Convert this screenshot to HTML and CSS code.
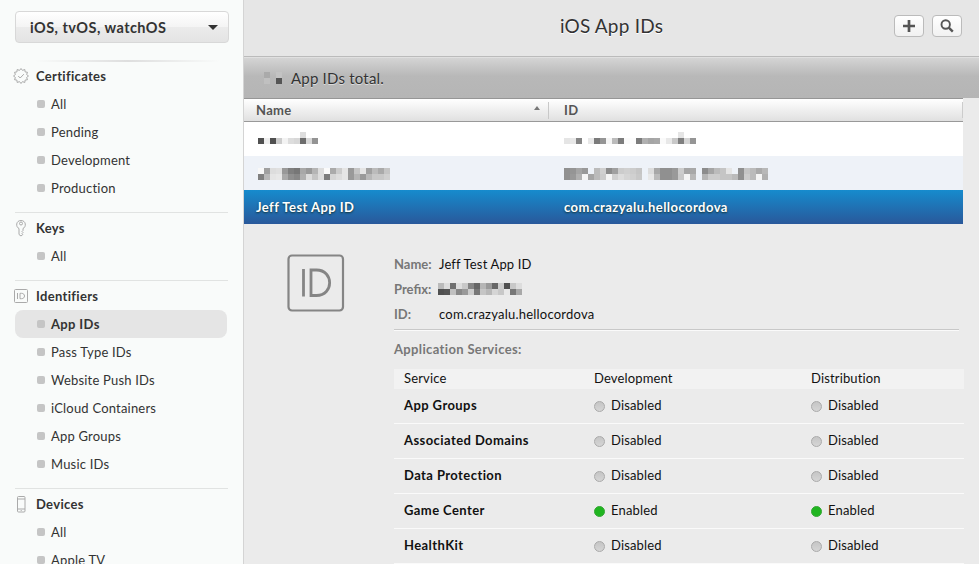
FILE: index.html
```
<!DOCTYPE html>
<html lang="en">
<head>
<meta charset="utf-8">
<title>iOS App IDs</title>
<link rel="stylesheet" href="styles.css">
</head>
<body>
<div class="app">
  <nav class="sidebar">
    <div class="picker"><span>iOS, tvOS, watchOS</span><i class="caret"></i></div>
    <div class="glow"></div>
    <section class="group first">
      <h2><svg class="gicon" width="16" height="18" viewBox="0 0 16 18"><path d="M8 1.500L9.500 3.400L11.800 2.500L12.100 4.900L14.500 5.300L13.600 7.500L15.500 9L13.600 10.500L14.500 12.700L12.100 13.100L11.800 15.500L9.500 14.600L8 16.500L6.500 14.600L4.200 15.500L3.900 13.100L1.500 12.700L2.400 10.500L.5 9L2.400 7.500L1.500 5.300L3.900 4.900L4.200 2.500L6.500 3.400Z"/><path d="M5.200 9l2 2L10.800 7.200"/></svg>Certificates</h2>
      <ul><li>All</li><li>Pending</li><li>Development</li><li>Production</li></ul>
    </section>
    <section class="group">
      <h2><svg class="gicon" width="16" height="18" viewBox="0 0 16 18"><path d="M6 9.500C2.500 8 2.800 1.500 8 1.500S13.500 8 10 9.500V11.500l-1 1 1 1-1 1 .8 1L8 17l-2-1.500z"/><circle cx="8" cy="4.500" r="1.500"/></svg>Keys</h2>
      <ul><li>All</li></ul>
    </section>
    <section class="group">
      <h2><svg class="gicon" width="16" height="18" viewBox="0 0 16 18"><rect x="1.500" y="2.500" width="13" height="13" rx="1"/><path d="M4.500 6v6M7 6.300v5.400h1.500c4 0 4-5.400 0-5.400z"/></svg>Identifiers</h2>
      <ul><li class="on">App IDs</li><li>Pass Type IDs</li><li>Website Push IDs</li><li>iCloud Containers</li><li>App Groups</li><li>Music IDs</li></ul>
    </section>
    <section class="group">
      <h2><svg class="gicon" width="16" height="18" viewBox="0 0 16 18"><rect x="4.500" y="1.500" width="7.500" height="15.500" rx="1"/><path d="M4.500 4h7.500M4.500 14h7.500M7.700 15.500h1"/></svg>Devices</h2>
      <ul><li>All</li><li>Apple TV</li></ul>
    </section>
  </nav>
  <main class="main">
    <header class="top">
      <h1>iOS App IDs</h1>
      <div class="tools">
        <span class="btn"><svg width="14" height="14" viewBox="0 0 14 14"><path d="M7 1v12M1 7h12" stroke-width="2.700"/></svg></span>
        <span class="btn"><svg width="14" height="14" viewBox="0 0 14 14"><circle cx="5.700" cy="5.500" r="4.200" stroke-width="1.900"/><path d="M8.800 8.600l4 4" stroke-width="2.400"/></svg></span>
      </div>
    </header>
    <div class="total"><span class="mosaic count" data-mosaic="count"></span><span class="total-text">App IDs total.</span></div>
    <div class="list">
      <div class="row head"><div class="name">Name<i class="sort"></i></div><div class="id">ID</div></div>
      <div class="row plain"><div class="name"><span class="mosaic" data-mosaic="name1"></span></div><div class="id"><span class="mosaic" data-mosaic="id1"></span></div></div>
      <div class="row alt"><div class="name"><span class="mosaic" data-mosaic="name2"></span></div><div class="id"><span class="mosaic" data-mosaic="id2"></span></div></div>
      <div class="row selected"><div class="name">Jeff Test App ID</div><div class="id">com.crazyalu.hellocordova</div></div>
    </div>
    <div class="detail">
      <svg class="badge" width="58" height="58" viewBox="0 0 58 58"><rect x="1.500" y="1.500" width="54.500" height="55" rx="3.500"/><path d="M16.500 15v27.500M24 16v25.500h5.500c17.500 0 17.500-25.500 0-25.500z"/></svg>
      <div class="info">
        <dl>
          <dt>Name:</dt><dd>Jeff Test App ID</dd>
          <dt>Prefix:</dt><dd><span class="mosaic prefix" data-mosaic="prefix"></span></dd>
          <dt>ID:</dt><dd class="appid">com.crazyalu.hellocordova</dd>
        </dl>
        <h3>Application Services:</h3>
        <div class="services">
          <div class="svc labels"><span>Service</span><span>Development</span><span>Distribution</span></div>
          <div class="svc"><b>App Groups</b><span><i class="dot"></i>Disabled</span><span><i class="dot"></i>Disabled</span></div>
          <div class="svc"><b>Associated Domains</b><span><i class="dot"></i>Disabled</span><span><i class="dot"></i>Disabled</span></div>
          <div class="svc"><b>Data Protection</b><span><i class="dot"></i>Disabled</span><span><i class="dot"></i>Disabled</span></div>
          <div class="svc"><b>Game Center</b><span><i class="dot green"></i>Enabled</span><span><i class="dot green"></i>Enabled</span></div>
          <div class="svc"><b>HealthKit</b><span><i class="dot"></i>Disabled</span><span><i class="dot"></i>Disabled</span></div>
        </div>
      </div>
    </div>
  </main>
</div>
<script src="mosaic.js"></script>
</body>
</html>
```
FILE: styles.css
```
* { box-sizing: border-box; }
body { margin: 0; font-family: Lato, sans-serif; font-size: 13px; color: #222; }
h1, h2, h3, ul, dl, dd { margin: 0; padding: 0; }
.app { display: flex; width: 979px; height: 564px; overflow: hidden; background: #ebebeb; }
.sidebar { width: 244px; flex: none; padding: 11px 15px 0; background: #f9fbfa; border-right: 1px solid #d4d4d4; letter-spacing: .2px; color: #333; }
.picker { height: 32px; width: 214px; border: 1px solid #d8d8d8; border-radius: 4px; display: flex; align-items: center; justify-content: space-between; padding: 0 10px 0 14px; font-size: 14.500px; letter-spacing: .45px; font-weight: 700; background: linear-gradient(#fff, #f4f4f4 50%, #ebebeb 50%, #e4e4e4); }
.caret { border: 5px solid transparent; border-top: 5px solid #333; border-bottom: 0; }
.glow { height: 2px; margin: 17px 8px 0 20px; background: linear-gradient(90deg, transparent, #dedede 50%, transparent); }
.group { width: 213px; border-top: 1px solid #e1e3e2; margin-top: 10px; padding-top: 1px; }
.group.first { margin-top: 0; padding-top: 0; border-top: 0; }
.group h2 { display: flex; align-items: center; gap: 7px; height: 28px; margin-left: -2px; padding-bottom: 1px; font-size: 13px; letter-spacing: .32px; }
.gicon { flex: none; fill: none; stroke: #aaa; stroke-width: 1; }
.group ul { list-style: none; }
.group li { height: 28px; display: flex; align-items: center; padding: 0 0 1px 22px; gap: 6px; border-radius: 8px; width: 212px; }
.group li::before { content: ""; width: 8px; height: 8px; border-radius: 2px; background: #c5c5c5; margin-top: 1px; }
.group li.on { background: #e5e5e5; font-weight: 700; letter-spacing: .35px; }
.main { flex: 1; min-width: 0; }
.top { height: 57px; display: grid; grid-template-columns: 1fr auto; background: #e6e6e6; border-bottom: 1px solid #bbb; }
.top h1 { grid-area: 1 / 1 / 2 / 3; text-align: center; font-size: 19px; line-height: 51px; letter-spacing: .2px; font-weight: 400; color: #333; text-shadow: 0 1px #fff; }
.tools { grid-area: 1 / 2; display: flex; gap: 8px; padding: 15px 17px 0 0; }
.btn { width: 30px; height: 22px; border: 1px solid #bbb; border-radius: 4px; background: linear-gradient(#fff, #f1f1f1); display: flex; align-items: center; justify-content: center; }
.btn svg { fill: none; stroke: #555; }
.total { height: 41px; display: flex; align-items: center; background: linear-gradient(#d4d4d4, #b8b8b8 45%, #b5b5b5); border-top: 1px solid #e0e0e0; padding-left: 20px; color: #333; font-size: 15px; text-shadow: 0 1px #ddd; }
.count { width: 27px; margin-top: -1px; }
.total-text { letter-spacing: .2px; }
.list { width: 719px; }
.row { height: 34px; display: flex; align-items: center; background: #fff; }
.row.plain { padding-bottom: 2px; }
.row.alt { background: #eef2f8; padding-top: 2px; }
.name { width: 308px; padding-left: 12px; }
.id { padding-left: 12px; }
.row .mosaic { margin-left: 2px; }
.row .id .mosaic { margin-left: 0; }
.head { height: 24px; border-top: 1px solid #969696; border-bottom: 1px solid #999; background: linear-gradient(#fff, #e0e0e0); font-weight: 700; color: #555; letter-spacing: .3px; }
.head .name { display: flex; align-items: center; justify-content: space-between; width: 305px; height: 17px; border-right: 1px solid #c8c8c8; padding-right: 8px; }
.head .id { padding-left: 15px; flex: 1; border-right: 1px solid #ccc; }
.sort { border: 3.500px solid transparent; border-bottom: 4px solid #777; border-top: 0; margin-bottom: 4px; }
.selected { padding-bottom: 1px; background: linear-gradient(#168bcd, #29589a); color: #fff; font-weight: 700; letter-spacing: .45px; text-shadow: 0 1px 2px #133; }
.detail { display: flex; padding: 27px 15px 0 43px; color: #111; }
.badge { margin-top: 3px; flex: none; fill: none; stroke: #858585; stroke-width: 2.200; }
.badge path { stroke-width: 2.800; }
.info { margin-left: 49px; width: 570px; flex: none; }
dl { display: grid; grid-template-columns: 45px 1fr; grid-auto-rows: 25px; align-items: center; width: 565px; height: 79px; border-bottom: 1px solid #c8c8c8; box-shadow: 0 1px #fafafa; }
dt, h3 { font-size: 13px; font-weight: 700; color: #777; }
dd { letter-spacing: .15px; }
.appid { letter-spacing: .22px; }
.prefix { margin-left: -1px; }
h3 { line-height: 38px; height: 39px; letter-spacing: .35px; }
.services { letter-spacing: .15px; }
.svc { height: 35px; display: grid; grid-template-columns: 190px 217px 1fr; align-items: center; padding: 0 0 2px 10px; border-bottom: 1px solid #fafafa; }
.svc b { letter-spacing: .42px; }
.svc > span { display: flex; align-items: center; }
.labels { height: 20px; background: #f2f2f2; border: 0; }
.dot { width: 11px; height: 11px; border-radius: 50%; border: 1px solid #aaa; background: linear-gradient(#c5c5c5, #d5d5d5); margin: 2px 6px 0 0; }
.dot.green { background: #20b520; border-color: #35a735; }
.mosaic { display: block; line-height: 0; }
```
FILE: mosaic.js
```
// Two rows of gray levels per block; "--" leaves a cell empty.
const blocks = {
  count: ["aa -- c3", "c0 -- 55"],
  name1: ["-- -- -- -- -- -- -- dd -- --", "50 ee 50 cc f3 dd d8 6c d8 93"],
  id1: ["-- -- -- -- -- -- -- -- -- -- -- -- -- -- -- -- -- -- -- e5 -- --", "e5 e8 85 -- e8 7a 95 f5 bb 7c fa fc 7c b0 a5 a8 fa e8 c8 7f d5 95"],
  name2: ["f8 a0 dd e0 99 7f 77 a8 99 b5 dd fa aa cc e5 99 c5 e5 a0 bb aa c5", "80 b8 e5 e8 aa 90 88 b0 dd c5 dd 7c d5 dd e5 99 b5 99 b8 c8 c8 d0"],
  id2: ["90 95 a5 99 -- bb d0 8c a0 cc d0 cc c5 -- dd a8 90 90 99 cc a5 a8 -- 8c a5 bb c5 e5 -- 90 c5 bb aa b8", "90 99 b0 f5 a5 bb cc f5 d0 dd d5 d0 c8 -- e8 bb 90 90 99 c8 f5 b8 -- b5 cc cc c5 c5 bb 90 cc bb f5 b0"],
  prefix: ["bb dd 70 dd c8 85 66 b5 99 66 cc 50 c8 dd", "50 55 c0 88 99 cc 77 c5 b8 d5 c8 e8 77 a8"]
};
document.querySelectorAll("[data-mosaic]").forEach(el => {
  const rows = blocks[el.dataset.mosaic].map(r => r.split(" "));
  let cells = "";
  rows.forEach((row, y) => row.forEach((v, x) => {
    if (v !== "--") cells += `<rect x="${x * 6}" y="${y * 6}" width="6" height="6" fill="#${v}${v}${v}"/>`;
  }));
  el.innerHTML = `<svg width="${rows[0].length * 6}" height="12" shape-rendering="crispEdges">${cells}</svg>`;
});
```
